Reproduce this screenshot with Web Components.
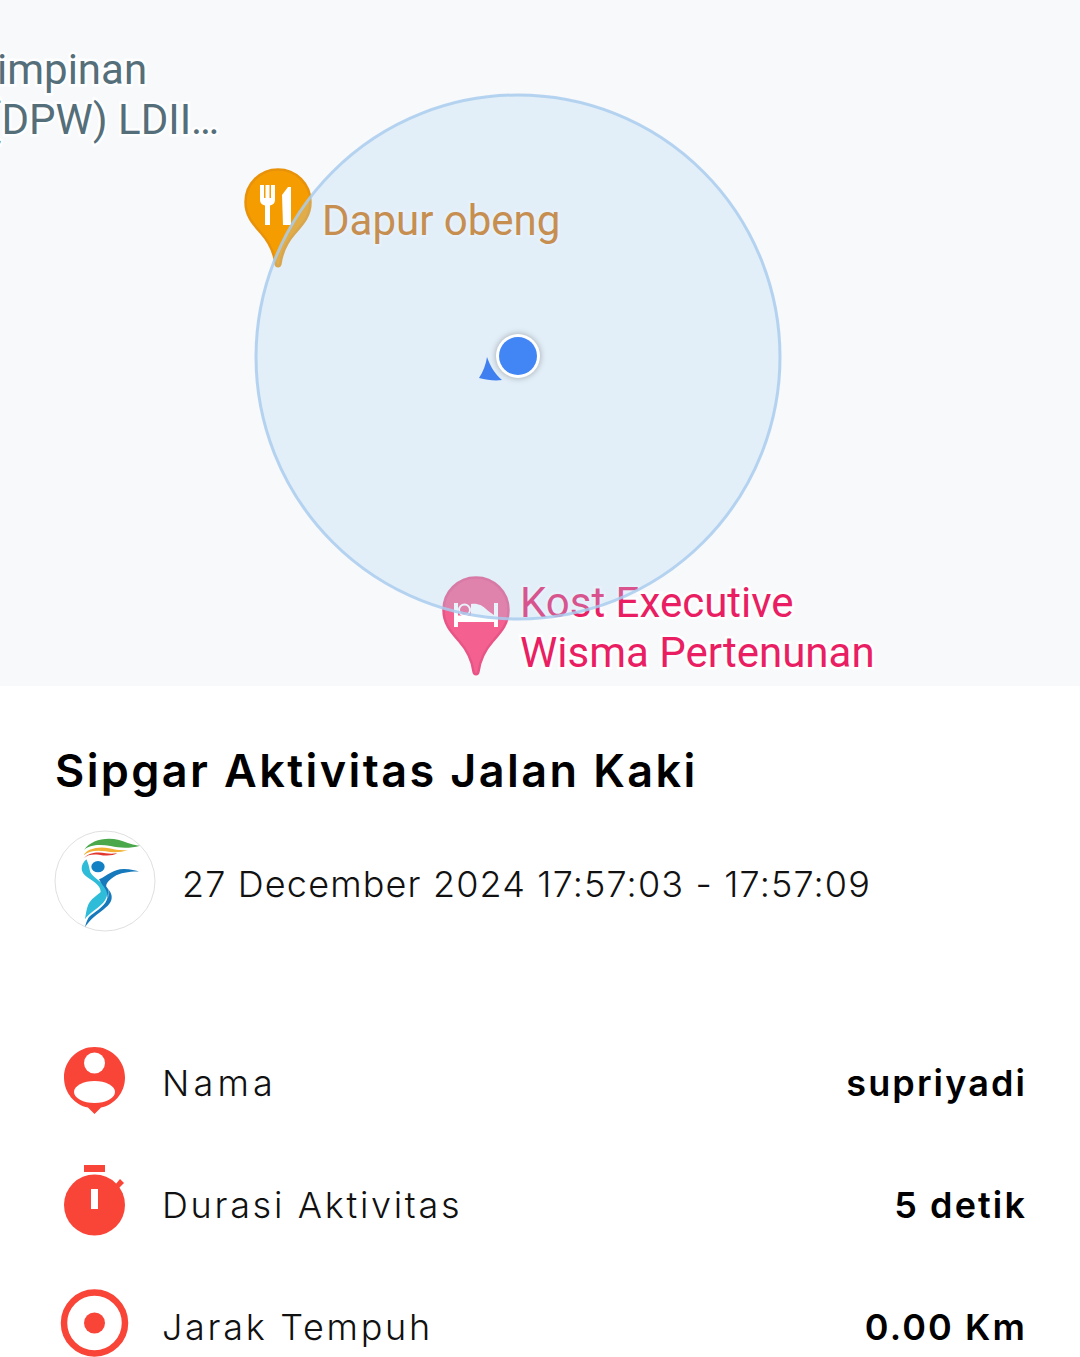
<!DOCTYPE html>
<html>
<head>
<meta charset="utf-8">
<title>Sipgar Aktivitas Jalan Kaki</title>
<style>
  html, body { margin: 0; height: 1357px; overflow: hidden; background: #fff; }
</style>
</head>
<body>
<activity-screen>
  <map-view slot="map">
    <map-label style="left:-3px;top:45px" color="#546e7a">impinan</map-label>
    <map-label style="left:-13px;top:95px" color="#546e7a">(DPW) LDII…</map-label>
    <map-pin style="left:244px;top:168px" kind="food"></map-pin>
    <map-label style="left:322px;top:196px" color="#d0700a">Dapur obeng</map-label>
    <map-pin style="left:442px;top:576px" kind="bed"></map-pin>
    <map-label style="left:520px;top:578px" color="#e91e63">Kost Executive<br>Wisma Pertenunan</map-label>
  </map-view>
  <activity-summary slot="summary" heading="Sipgar Aktivitas Jalan Kaki" date="27 December 2024 17:57:03 - 17:57:09">
    <stat-row icon="person" label="Nama" value="supriyadi" tracking="4.200px"></stat-row>
    <stat-row icon="timer" label="Durasi Aktivitas" value="5 detik"></stat-row>
    <stat-row icon="target" label="Jarak Tempuh" value="0.00 Km"></stat-row>
  </activity-summary>
</activity-screen>

<script>
class ActivityScreen extends HTMLElement {
  constructor(){
    super();
    this.attachShadow({mode: 'open'});
    this.shadowRoot.innerHTML = `<style>
      :host{ display:flex; flex-direction:column; width:1080px; height:1357px; overflow:hidden; }
    </style>
    <slot name="map"></slot>
    <slot name="summary"></slot>`;
  }
}

class MapView extends HTMLElement {
  constructor(){
    super();
    this.attachShadow({mode: 'open'});
    this.shadowRoot.innerHTML = `<style>
      :host{ display:block; position:relative; height:686px; background:#f8f9fb; overflow:hidden; flex:none; }
      svg{ position:absolute; left:0; top:0; }
    </style>
    <slot></slot>
    <svg width="1080" height="686" viewBox="0 0 1080 686">
      <circle cx="518" cy="357" r="262" fill="rgba(175,212,241,.3)" stroke="#a9cdee" stroke-opacity=".85" stroke-width="3"/>
      <path d="M487 357C490 366 495 374 502 380C495 381 487 380 479 378C483 372 486 364 487 357Z" fill="#3f7ff0"/>
      <circle cx="518" cy="356" r="22" fill="#fff" style="filter:drop-shadow(0 0 3px rgba(0,0,0,.3))"/>
      <circle cx="518" cy="356" r="19" fill="#4285f4"/>
    </svg>`;
  }
}

const PIN_SHAPE = 'M34 1.5C16 1.5 1.5 16 1.5 34C1.5 48 9 56 17 65C25 74 30 85 31.5 95.5C32 99 36 99 36.5 95.5C38 85 43 74 51 65C59 56 66.5 48 66.5 34C66.5 16 52 1.5 34 1.5Z';
const PIN_ICONS = {
  food: {
    fill: '#f59d00', edge: '#e8920a',
    glyph: '<path d="M16 17h4v13h1.500v-13h4v13h1.500v-13h4v15c0 3-2 5-5 5.500v19.500h-5v-19.500c-3-.5-5-2.500-5-5.500z"/><path d="M44 19h3v38h-8l-1-30z"/>'
  },
  bed: {
    fill: '#f4608f', edge: '#e85486',
    glyph: '<rect x="12" y="27" width="4" height="24"/><rect x="52" y="27" width="4" height="24"/><rect x="12" y="41" width="44" height="5"/><circle cx="22.500" cy="34" r="5.500" fill="none" stroke="#fff" stroke-width="2"/><path d="M16 39.500h13v2h-13z"/><path d="M29 28C36 27 41 30 44 33C46 35 49 37 52 39L52 41L29 41Z"/>'
  }
};

class MapPin extends HTMLElement {
  static get observedAttributes() { return ['kind']; }
  constructor(){
    super();
    this.attachShadow({mode: 'open'});
  }
  attributeChangedCallback(name, oldValue, newValue){
    const p = PIN_ICONS[newValue];
    this.shadowRoot.innerHTML = `<style>
      :host{ position:absolute; display:block; width:68px; height:100px; }
      svg{ display:block; }
    </style>
    <svg width="68" height="100" viewBox="0 0 68 100">
      <path d="${PIN_SHAPE}" fill="${p.fill}" stroke="${p.edge}" stroke-width="2.500"/>
      <g fill="#fff">${p.glyph}</g>
    </svg>`;
  }
}

class MapLabel extends HTMLElement {
  constructor(){
    super();
    this.attachShadow({mode: 'open'});
    this.shadowRoot.innerHTML = `<style>
      :host{ position:absolute; display:block; white-space:nowrap;
        font:400 42px/50px Roboto, sans-serif; color:var(--c);
        -webkit-text-stroke:5px rgba(255,255,255,.9); paint-order:stroke fill; }
    </style><slot></slot>`;
  }
  connectedCallback(){
    this.style.setProperty('--c', this.getAttribute('color'));
  }
}

class SipgarLogo extends HTMLElement {
  constructor(){
    super();
    this.attachShadow({mode: 'open'});
    this.shadowRoot.innerHTML = `<style>
      :host{ display:block; width:102px; height:102px; flex:none; }
      svg{ display:block; }
    </style>
    <svg width="102" height="102" viewBox="40 30 306 306">
      <circle cx="193" cy="183" r="150" fill="#fff" stroke="#d8d8d8" stroke-width="2.500"/>
      <path d="M130 90C150 60 195 50 235 60C262 68 278 76 298 77C270 85 240 85 210 78C175 72 145 75 130 90Z" fill="#4aa84a"/>
      <path d="M129 106C138 86 175 78 205 85C225 90 245 92 262 90C240 98 215 98 195 94C170 90 145 92 129 106Z" fill="#f2b134"/>
      <path d="M130 115C145 96 175 95 195 100C205 102 218 102 230 100C215 108 195 108 175 104C155 102 140 104 130 115Z" fill="#e2372e"/>
      <ellipse cx="172" cy="140" rx="20" ry="17" fill="#1480c4"/>
      <path d="M137 118C118 135 118 158 140 172C165 188 180 200 180 216C170 226 150 236 142 256C137 270 135 285 133 298C145 278 170 268 188 248C200 232 205 216 195 200C180 182 150 170 147 150C145 138 142 128 137 118Z" fill="#2fbcd8"/>
      <path d="M175 178C200 168 215 147 250 147C270 147 285 152 297 155C270 154 240 158 220 170C205 180 195 190 197 200C210 214 216 226 212 240C205 266 160 280 133 322C136 308 140 300 144 292C160 276 190 262 198 240C204 222 196 208 186 196C182 190 178 184 175 178Z" fill="#1579bb"/>
      <path d="M200 200C208 216 205 232 190 248C170 266 150 280 137 300" fill="none" stroke="#fff" stroke-width="1.500" opacity=".8"/>
    </svg>`;
  }
}

class ActivitySummary extends HTMLElement {
  constructor(){
    super();
    this.attachShadow({mode: 'open'});
    this.shadowRoot.innerHTML = `<style>
      :host{ display:block; padding:56px 53px 0 54px; font-family:Inter, sans-serif; color:#000; background:#fff; }
      h1{ margin:0 0 0 1px; font-size:45px; line-height:58px; font-weight:600; letter-spacing:2.400px; white-space:nowrap; }
      .when{ display:flex; align-items:center; gap:26px; margin-top:30px; font-size:36px; font-weight:300; letter-spacing:1.150px; color:#111; white-space:nowrap; }
      .when span{ padding-top:6px; }
      .rows{ display:flex; flex-direction:column; margin-top:86px; }
    </style>
    <h1>${this.getAttribute('heading')}</h1>
    <div class="when"><sipgar-logo></sipgar-logo><span>${this.getAttribute('date')}</span></div>
    <div class="rows"><slot></slot></div>`;
  }
}

const ROW_ICONS = {
  person: `<path d="M39.500 7C22.500 7 9 20.500 9 37.500C9 53 20 65 33 67.500L39.500 74L46 67.500C59 65 70 53 70 37.500C70 20.500 56.500 7 39.500 7Z" fill="#f94438"/>
    <circle cx="39.500" cy="23" r="10.500" fill="#fff"/><ellipse cx="39.500" cy="52" rx="20.500" ry="11" fill="#fff"/>`,
  timer: `<rect x="29" y="3" width="21" height="7" fill="#f94438"/>
    <path d="M60 23L65 17L69 21L63 27Z" fill="#f94438"/>
    <circle cx="39.500" cy="43" r="30.500" fill="#f94438"/><rect x="36" y="27" width="7" height="20" fill="#fff"/>`,
  target: `<circle cx="39.500" cy="39" r="30.500" fill="none" stroke="#f94438" stroke-width="6.500"/><circle cx="39.500" cy="39" r="10.500" fill="#f94438"/>`
};

class StatRow extends HTMLElement {
  constructor(){
    super();
    this.attachShadow({mode: 'open'});
    const icon = this.getAttribute('icon');
    const tracking = this.getAttribute('tracking') || '2.700px';
    this.shadowRoot.innerHTML = `<style>
      :host{ display:flex; align-items:center; height:122px; font-family:Inter, sans-serif; font-size:36px; white-space:nowrap; }
      svg{ display:block; flex:none; margin-left:1px; }
      span{ padding-top:8px; }
      .label{ margin-left:28px; font-weight:300; letter-spacing:${tracking}; color:#111; }
      .value{ margin-left:auto; font-weight:600; letter-spacing:2.100px; color:#000; }
    </style>
    <svg width="79" height="78" viewBox="0 0 79 78">${ROW_ICONS[icon]}</svg>
    <span class="label">${this.getAttribute('label')}</span>
    <span class="value">${this.getAttribute('value')}</span>`;
  }
}

customElements.define('activity-screen', ActivityScreen);
customElements.define('map-view', MapView);
customElements.define('map-pin', MapPin);
customElements.define('map-label', MapLabel);
customElements.define('sipgar-logo', SipgarLogo);
customElements.define('activity-summary', ActivitySummary);
customElements.define('stat-row', StatRow);
</script>
</body>
</html>
